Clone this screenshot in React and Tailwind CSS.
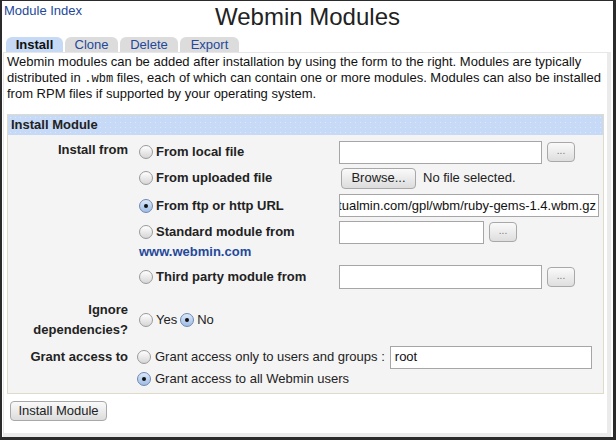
import React from "react";

const LINK = "text-[#24489a]";

function Radio({ checked }) {
  return (
    <span
      className={`inline-flex items-center justify-center w-[14px] h-[14px] rounded-full border flex-shrink-0 ${
        checked
          ? "border-[#6f88b0] bg-gradient-to-b from-[#dbe8f8] to-[#9fbde6]"
          : "border-[#9a9a9a] bg-gradient-to-b from-[#ffffff] to-[#d6d6d6]"
      }`}
    >
      {checked && <span className="w-[4px] h-[4px] rounded-full bg-[#111]" />}
    </span>
  );
}

function DotsButton() {
  return (
    <span className="inline-flex items-end justify-center w-[28px] h-[20px] rounded-[4px] border border-[#a8a8a8] bg-gradient-to-b from-[#fafafa] to-[#dedede] text-[#777] text-[10px] leading-none pb-[5px]">
      ...
    </span>
  );
}

function TextBox({ w, children }) {
  return (
    <div
      className={`${w} h-[23px] border border-[#a6a6a6] bg-white flex items-center overflow-hidden text-[13px] text-[#111] px-[4px]`}
    >
      {children}
    </div>
  );
}

function Option({ checked, label, children }) {
  return (
    <div className="flex items-center">
      <div className="w-[200px] flex items-center gap-[3px] font-bold text-[#222]">
        <Radio checked={checked} />
        <span>{label}</span>
      </div>
      <div className="flex items-center gap-[5px]">{children}</div>
    </div>
  );
}

const TABS = [
  { label: "Install", active: true, w: "w-[57px]" },
  { label: "Clone", w: "w-[53px]" },
  { label: "Delete", w: "w-[58px]" },
  { label: "Export", w: "w-[59px]" },
];

export default function App() {
  return (
    <div className="w-[616px] h-[440px] bg-white border-l-2 border-r-[3px] border-t border-b-[3px] border-[#2b2b2b] flex flex-col font-['Liberation_Sans',Arial,sans-serif] text-[13px] text-[#1a1a1a] overflow-hidden">
      {/* Header */}
      <div className="grid grid-cols-[1fr_auto_1fr] h-[36px]">
        <a className={`${LINK} pl-[2px] pt-[2px] leading-[16px] text-[13px]`}>Module Index</a>
        <h1 className="text-[24px] leading-[28px] pt-[2px] text-[#222]">Webmin Modules</h1>
        <div />
      </div>

      {/* Tabs */}
      <div className="flex gap-[2px] pl-[4px] h-[15px]">
        {TABS.map((t) => (
          <div
            key={t.label}
            className={`${t.w} h-[15px] rounded-t-[6px] flex items-center justify-center leading-none text-[13px] ${
              t.active ? "bg-[#c6daf5] font-bold text-[#111]" : "bg-[#dcdcdc] text-[#24489a]"
            }`}
          >
            {t.label}
          </div>
        ))}
      </div>

      {/* Content */}
      <div className="flex-1 ml-[1px] mr-[2px] border border-[#e6e6e6] border-r-[4px] border-b-[4px] border-r-[#ebebeb] border-b-[#ebebeb] flex flex-col">
        <p className="px-[3px] pt-[1px] leading-[16px] text-[13px] text-[#111]">
          Webmin modules can be added after installation by using the form to the right. Modules are typically
          distributed in <code className="font-['Liberation_Mono',monospace] text-[12px] leading-[14px]">.wbm</code> files, each of which can contain one or more modules. Modules can also be installed
          from RPM files if supported by your operating system.
        </p>

        {/* Section */}
        <div className="mt-[12px] ml-[3px] mr-[3px] border border-[#e0dac9] bg-[#f4f4f4]">
          <div className="h-[20px] bg-[#c6daf7] bg-[radial-gradient(circle,#dce8fa_0.6px,transparent_0.8px)] bg-[length:5px_5px] font-bold text-[#222] pl-[3px] flex items-center">
            Install Module
          </div>

          {/* Install from */}
          <div className="flex pt-[4px]">
            <div className="w-[120px] text-right font-bold text-[#222] leading-[22px]">Install from</div>
            <div className="ml-[11px] flex flex-col">
              <div className="h-[26px] flex items-center">
                <Option label="From local file">
                  <TextBox w="w-[203px]" />
                  <DotsButton />
                </Option>
              </div>
              <div className="h-[26px] flex items-center">
                <Option label="From uploaded file">
                  <span className="ml-[2px] inline-flex items-center justify-center w-[75px] h-[21px] rounded-[4px] border border-[#a8a8a8] bg-gradient-to-b from-[#fafafa] to-[#dcdcdc] text-[#222]">
                    Browse...
                  </span>
                  <span className="ml-[2px] text-[#222]">No file selected.</span>
                </Option>
              </div>
              <div className="h-[29px] flex items-center">
                <Option checked label="From ftp or http URL">
                  <div className="w-[260px] h-[23px] border border-[#a6a6a6] bg-white flex items-center justify-end overflow-hidden whitespace-nowrap pr-[2px] text-[#111]">
                    <span className="flex-shrink-0">http://download.virtualmin.com/gpl/wbm/ruby-gems-1.4.wbm.gz</span>
                  </div>
                </Option>
              </div>
              <div className="h-[24px] flex items-center">
                <Option label="Standard module from">
                  <TextBox w="w-[145px]" />
                  <DotsButton />
                </Option>
              </div>
              <div className={`h-[15px] leading-[15px] font-bold ${LINK}`}>www.webmin.com</div>
              <div className="h-[36px] flex items-center">
                <Option label="Third party module from">
                  <TextBox w="w-[203px] h-[24px]" />
                  <DotsButton />
                </Option>
              </div>
            </div>
          </div>

          {/* Ignore deps */}
          <div className="flex items-center mt-[5px] h-[40px]">
            <div className="w-[120px] text-right font-bold text-[#222] leading-[20px]">
              Ignore<br />dependencies?
            </div>
            <div className="ml-[11px] flex items-center gap-[3px] text-[#222]">
              <Radio />
              <span>Yes</span>
              <Radio checked />
              <span>No</span>
            </div>
          </div>

          {/* Grant access */}
          <div className="flex mt-[4px] pb-[5px]">
            <div className="w-[120px] text-right font-bold text-[#222] h-[26px] flex items-center justify-end">
              Grant access to
            </div>
            <div className="ml-[9px] flex flex-col text-[#222]">
              <div className="h-[26px] flex items-center gap-[4px]">
                <Radio />
                <span>Grant access only to users and groups :</span>
                <TextBox w="ml-[1px] w-[202px]">root</TextBox>
              </div>
              <div className="h-[18px] flex items-center gap-[4px]">
                <Radio checked />
                <span>Grant access to all Webmin users</span>
              </div>
            </div>
          </div>
        </div>

        <div className="pl-[6px] pt-[7px]">
          <span className="inline-flex items-center justify-center w-[97px] h-[20px] rounded-[4px] border border-[#a8a8a8] bg-gradient-to-b from-[#fafafa] to-[#dcdcdc] text-[#222]">
            Install Module
          </span>
        </div>
      </div>
    </div>
  );
}
